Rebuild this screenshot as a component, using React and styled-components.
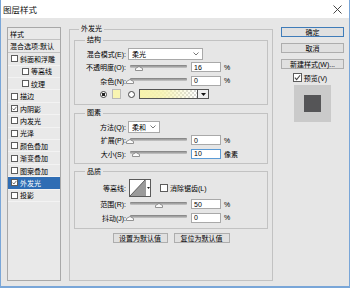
import React from 'react'
import styled, { createGlobalStyle } from 'styled-components'

const GlobalStyle = createGlobalStyle`
	html, body {
		margin: 0;
		padding: 0;
		background: #e6e6e6;
	}
	body {
		font-family: "Liberation Sans", "Noto Sans CJK SC", sans-serif;
		font-size: 7px;
		color: #000;
	}
`

const Window = styled.div`
	width: 350px;
	height: 288px;
	box-sizing: border-box;
	display: flex;
	flex-direction: column;
	background: #e6e6e6;
	border: 1px solid #79a6d8;
	border-top: none;
	border-bottom-width: 2px;
`
const TitleBar = styled.div`
	height: 18px;
	flex-shrink: 0;
	background: #fff;
	display: flex;
	align-items: center;
	justify-content: space-between;
	padding: 0 7px 0 2px;
`
const Title = styled.span`
	font-size: 8.5px;
	color: #111;
`
const Body = styled.div`
	flex: 1;
	min-height: 0;
	display: flex;
	gap: 8px;
	padding: 7px 5px 5px 6px;
`

/* left list */
const StyleList = styled.div`
	width: 54px;
	margin-top: 2px;
	box-sizing: border-box;
	border: 1px solid #a8a8a8;
	background: #e9e9e9;
	display: flex;
	flex-direction: column;
`
const ListHeader = styled.div`
	height: ${ p => p.$h }px;
	box-sizing: border-box;
	border-bottom: 1px solid #c2c2c2;
	padding-left: 2px;
	display: flex;
	align-items: center;
	white-space: nowrap;
`
const ListItem = styled.div`
	height: 12.4px;
	box-sizing: border-box;
	border-bottom: 1px solid #f3f3f3;
	padding-left: ${ p => p.$indent ? 14 : 3 }px;
	display: flex;
	align-items: center;
	gap: 1px;
	white-space: nowrap;
	background: ${ p => p.$selected ? '#2f6db4' : 'transparent' };
	color: ${ p => p.$selected ? '#fff' : 'inherit' };
`
const Box = styled.span`
	width: ${ p => p.$size }px;
	height: ${ p => p.$size }px;
	box-sizing: border-box;
	flex-shrink: 0;
	border: 1px solid #5c5c5c;
	background: #fff;
	display: inline-flex;
	align-items: center;
	justify-content: center;
	margin-right: ${ p => p.$gap }px;
`

/* middle */
const OuterGroup = styled.fieldset`
	width: 204px;
	box-sizing: border-box;
	margin: 0;
	padding: 3px 4px 0 4px;
	border: 1px solid #c2c2c2;
	min-width: 0;
`
const Group = styled.fieldset`
	margin: ${ p => p.$top }px 0 0 0;
	padding: 3px 0 ${ p => p.$bottom }px 0;
	border: 1px solid #c2c2c2;
	min-width: 0;
`
const Legend = styled.legend`
	padding: 0 2px;
	margin-left: ${ p => p.$left }px;
	line-height: 8px;
	font-size: 7px;
`
const Row = styled.div`
	height: ${ p => p.$h }px;
	display: flex;
	align-items: center;
`
const Label = styled.span`
	width: 51px;
	flex-shrink: 0;
	margin-right: 2px;
	text-align: right;
	white-space: nowrap;
`
const ColorCell = styled.span`
	width: 53px;
	flex-shrink: 0;
	box-sizing: border-box;
	padding-right: 7px;
	display: flex;
	align-items: center;
	justify-content: flex-end;
	gap: 5px;
`
const Select = styled.div`
	width: ${ p => p.$w }px;
	height: 12px;
	box-sizing: border-box;
	border: 1px solid #a9a9a9;
	background: #fff;
	display: flex;
	align-items: center;
	justify-content: space-between;
	padding: 0 3px 0 3px;
`
const SliderWrap = styled.div`
	position: relative;
	width: 57px;
	height: 9px;
	margin-left: 2px;
	display: flex;
	align-items: center;
`
const Track = styled.div`
	width: 100%;
	height: 3px;
	margin-top: -2px;
	border-radius: 1px;
	background: linear-gradient(#7d7d7d, #c9c9c9);
`
const Thumb = styled.svg`
	position: absolute;
	top: 3px;
`
const NumberInput = styled.div`
	width: 30px;
	height: 10px;
	box-sizing: border-box;
	margin-left: 4px;
	padding-left: 2px;
	border: 1px solid ${ p => p.$focus ? '#5b9bd6' : '#a9a9a9' };
	background: #fff;
	display: flex;
	align-items: center;
`
const Unit = styled.span`
	margin-left: 3px;
	white-space: nowrap;
`
const Radio = styled.span`
	width: 7px;
	height: 7px;
	box-sizing: border-box;
	border-radius: 50%;
	border: 1px solid #444;
	background: ${ p => p.$on ? 'radial-gradient(circle, #222 0 1.6px, #fff 2px)' : '#fff' };
	flex-shrink: 0;
`
const Swatch = styled.span`
	width: 9px;
	height: 10px;
	box-sizing: border-box;
	border: 1px solid #b8b8b8;
	background: #f8f4b2;
`
const GradientPicker = styled.div`
	display: flex;
	margin-left: 4px;
	height: 10px;
	border: 1px solid #555;
	box-sizing: border-box;
`
const GradientBar = styled.div`
	width: 57px;
	background:
		linear-gradient(to right, #f7f3ad, rgba(247, 243, 173, 0.85) 40%, rgba(247, 243, 173, 0)),
		repeating-conic-gradient(#d9d9d9 0 25%, #fff 0 50%) 0 0 / 4px 4px;
`
const DropButton = styled.div`
	width: 10px;
	border-left: 1px solid #555;
	background: #efefef;
	display: flex;
	align-items: center;
	justify-content: center;
`
const Contour = styled.div`
	width: 22px;
	height: 18px;
	box-sizing: border-box;
	margin-left: 1px;
	border: 1px solid #5a5a5a;
	background: #fff;
	display: flex;
`
const ContourArrow = styled.div`
	flex: 1;
	border-left: 1px solid #9a9a9a;
	display: flex;
	align-items: center;
	justify-content: center;
`
const CheckLabel = styled.span`
	display: flex;
	align-items: center;
	margin-left: 9px;
	white-space: nowrap;
`
const ButtonRow = styled.div`
	display: flex;
	justify-content: center;
	gap: 6px;
	margin-top: 4px;
`
const Button = styled.div`
	width: ${ p => p.$w }px;
	height: 10.5px;
	box-sizing: border-box;
	border: 1px solid #adadad;
	background: #e0e0e0;
	display: flex;
	align-items: center;
	justify-content: center;
	white-space: nowrap;
`

/* right */
const Side = styled.div`
	width: 63px;
	margin-top: 2px;
	display: flex;
	flex-direction: column;
	align-items: center;
`
const SideButton = styled.div`
	width: 100%;
	height: 10px;
	box-sizing: border-box;
	margin-bottom: ${ p => p.$mb }px;
	border: 1px solid ${ p => p.$primary ? '#3f7cb9' : '#adadad' };
	background: #e0e0e0;
	display: flex;
	align-items: center;
	justify-content: center;
	white-space: nowrap;
`
const PreviewToggle = styled.div`
	height: 9px;
	display: flex;
	align-items: center;
	margin-right: 5px;
`
const PreviewBox = styled.div`
	width: 37px;
	height: 37px;
	margin-top: 3px;
	background: #cacaca;
	display: flex;
	align-items: center;
	justify-content: center;
`
const PreviewSquare = styled.div`
	width: 17px;
	height: 17px;
	background: #555557;
`

const Check = ({ size = 7 }) => (
	<svg width={ size - 2 } height={ size - 2 } viewBox="0 0 8 8">
		<polyline points="1,4.2 3,6.4 7,1.4" fill="none" stroke="#444" strokeWidth="1.2" />
	</svg>
)

const CheckBox = ({ checked, size = 7, gap = 1 }) => (
	<Box $size={ size } $gap={ gap }>{ checked && <Check size={ size } /> }</Box>
)

const Chevron = () => (
	<svg width="6" height="4" viewBox="0 0 6 4">
		<polyline points="0.5,0.5 3,3 5.5,0.5" fill="none" stroke="#555" strokeWidth="0.8" />
	</svg>
)

const Slider = ({ value }) => (
	<SliderWrap>
		<Track />
		<Thumb width="8" height="5" viewBox="0 0 8 5" style={ { left: value / 100 * 57 - 4 } }>
			<polygon points="4,0.5 7.5,2.5 7.5,4.5 0.5,4.5 0.5,2.5" fill="#fafafa" stroke="#7a7a7a" strokeWidth="0.8" />
		</Thumb>
	</SliderWrap>
)

const SliderRow = ({ label, value, unit = '%', focus }) => (
	<Row $h={ 13.5 }>
		<Label>{ label }</Label>
		<Slider value={ value } />
		<NumberInput $focus={ focus }>{ value }</NumberInput>
		<Unit>{ unit }</Unit>
	</Row>
)

const effects = [
	{ name: '斜面和浮雕' },
	{ name: '等高线', indent: true },
	{ name: '纹理', indent: true },
	{ name: '描边' },
	{ name: '内阴影', checked: true },
	{ name: '内发光' },
	{ name: '光泽' },
	{ name: '颜色叠加' },
	{ name: '渐变叠加' },
	{ name: '图案叠加' },
	{ name: '外发光', checked: true, selected: true },
	{ name: '投影' },
]

const App = () =>
{
	return (
		<Window>
			<GlobalStyle />
			<TitleBar>
				<Title>图层样式</Title>
				<svg width="9" height="9" viewBox="0 0 9 9">
					<path d="M0.5 0.5 L8.5 8.5 M8.5 0.5 L0.5 8.5" stroke="#333" strokeWidth="0.9" />
				</svg>
			</TitleBar>
			<Body>
				<StyleList>
					<ListHeader $h={ 12 }>样式</ListHeader>
					<ListHeader $h={ 13.3 }>混合选项:默认</ListHeader>
					{ effects.map(e => (
						<ListItem key={ e.name } $indent={ e.indent } $selected={ e.selected }>
							<CheckBox checked={ e.checked } />
							{ e.name }
						</ListItem>
					)) }
				</StyleList>

				<OuterGroup>
					<Legend $left={ 5 }>外发光</Legend>
					<Group $top={ 0 } $bottom={ 3 }>
						<Legend $left={ 10 }>结构</Legend>
						<Row $h={ 13.5 }>
							<Label>混合模式(E):</Label>
							<Select $w={ 75 }>柔光<Chevron /></Select>
						</Row>
						<SliderRow label="不透明度(O):" value={ 16 } />
						<SliderRow label="杂色(N):" value={ 0 } />
						<Row $h={ 13.5 }>
							<ColorCell>
								<Radio $on />
								<Swatch />
							</ColorCell>
							<Radio />
							<GradientPicker>
								<GradientBar />
								<DropButton>
									<svg width="5" height="3" viewBox="0 0 5 3"><polygon points="0,0 5,0 2.5,3" fill="#111" /></svg>
								</DropButton>
							</GradientPicker>
						</Row>
					</Group>

					<Group $top={ 4 } $bottom={ 2 }>
						<Legend $left={ 10 }>图素</Legend>
						<Row $h={ 13.5 }>
							<Label>方法(Q):</Label>
							<Select $w={ 32 }>柔和<Chevron /></Select>
						</Row>
						<SliderRow label="扩展(P):" value={ 0 } />
						<SliderRow label="大小(S):" value={ 10 } unit="像素" focus />
					</Group>

					<Group $top={ 4 } $bottom={ 3 }>
						<Legend $left={ 10 }>品质</Legend>
						<Row $h={ 19 }>
							<Label>等高线:</Label>
							<Contour>
								<svg width="15" height="16" viewBox="0 0 15 16">
									<polygon points="0,16 15,0 15,16" fill="#9b9b9b" />
									<line x1="0" y1="16" x2="15" y2="0" stroke="#444" strokeWidth="0.8" />
								</svg>
								<ContourArrow>
									<svg width="3" height="2" viewBox="0 0 3 2"><polygon points="0,0 3,0 1.5,2" fill="#222" /></svg>
								</ContourArrow>
							</Contour>
							<CheckLabel>
								<CheckBox size={ 8 } gap={ 2 } />
								消除锯齿(L)
							</CheckLabel>
						</Row>
						<SliderRow label="范围(R):" value={ 50 } />
						<SliderRow label="抖动(J):" value={ 0 } />
					</Group>

					<ButtonRow>
						<Button $w={ 55 }>设置为默认值</Button>
						<Button $w={ 56 }>复位为默认值</Button>
					</ButtonRow>
				</OuterGroup>

				<Side>
					<SideButton $primary $mb={ 6 }>确定</SideButton>
					<SideButton $mb={ 6 }>取消</SideButton>
					<SideButton $mb={ 4 }>新建样式(W)...</SideButton>
					<PreviewToggle>
						<CheckBox checked size={ 9 } gap={ 2 } />
						预览(V)
					</PreviewToggle>
					<PreviewBox>
						<PreviewSquare />
					</PreviewBox>
				</Side>
			</Body>
		</Window>
	)
}

export default App
